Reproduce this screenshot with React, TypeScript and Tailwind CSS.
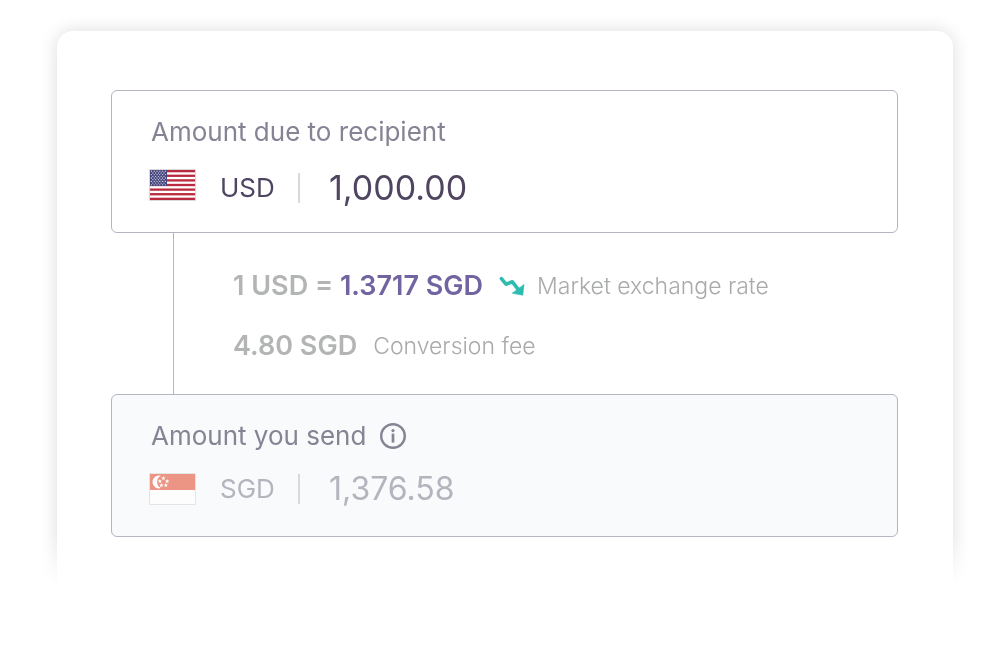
import type { ReactNode } from 'react';
import clsx from 'clsx';

const stripes = [0, 2, 4, 6, 8, 10, 12];

// alternating rows of 6 and 5 stars
const stars = Array.from({ length: 9 }).flatMap((_, row) =>
  Array.from({ length: row % 2 === 0 ? 6 : 5 }).map((_, col) => ({
    x: (row % 2 === 0 ? 1.6 : 3) + col * 2.8,
    y: 1.6 + row * 1.7,
  }))
);

const UsFlag = () => (
  <svg className="w-[47px] h-8 shrink-0" viewBox="0 0 47 32" aria-hidden="true">
    <rect width="47" height="32" rx="1" fill="#d9d9de" />
    <rect x="1" y="1" width="45" height="30" fill="#fff" />
    {stripes.map((i) => (
      <rect key={i} x="1" y={1 + (i * 30) / 13} width="45" height={30 / 13} fill="#b92a3e" />
    ))}
    <rect x="1" y="1" width="17" height="16" fill="#46467f" />
    {stars.map((s) => (
      <circle key={`${s.x}-${s.y}`} cx={s.x + 0.8} cy={s.y + 0.6} r="0.65" fill="#d5d5e4" />
    ))}
  </svg>
);

const SgFlag = () => (
  <svg className="w-[47px] h-8 shrink-0" viewBox="0 0 47 32" aria-hidden="true">
    <rect width="47" height="32" rx="1" fill="#e4e4e9" />
    <rect x="1" y="1" width="45" height="30" fill="#fdfdfd" />
    <rect x="1" y="1" width="45" height="16" fill="#ed9585" />
    <path d="M10.6 2.6a6.4 6.4 0 1 0 1.4 12.4a6.7 6.7 0 0 1 0-12.2z" fill="#fff" />
    {[
      [14.4, 5.2],
      [10.9, 8.2],
      [18.2, 8.2],
      [12.4, 12.2],
      [16.8, 12.2],
    ].map(([x, y]) => (
      <path
        key={`${x}-${y}`}
        transform={`translate(${x} ${y}) scale(1.2)`}
        d="M0-1.8l.5 1.2h1.3L.8.3l.4 1.3L0 .8l-1.2.8.4-1.3-1-.9h1.3z"
        fill="#fff"
      />
    ))}
  </svg>
);

const TrendDownIcon = () => (
  <svg className="w-[26px] h-5" viewBox="0 0 26 20" aria-hidden="true">
    <path d="M2.4 2.6L7 8.2l6.4-2.4 5.4 7" fill="none" stroke="#2ebcb0" strokeWidth="3.6" strokeLinecap="round" strokeLinejoin="round" />
    <path d="M25 8.4L23.8 19.2L13.2 17.2z" fill="#2ebcb0" stroke="#2ebcb0" strokeWidth="0.6" strokeLinejoin="round" />
  </svg>
);

const InfoIcon = () => (
  <svg className="w-[26px] h-[26px]" viewBox="0 0 26 26" aria-hidden="true">
    <circle cx="13" cy="13" r="11.8" fill="none" stroke="currentColor" strokeWidth="2.4" />
    <circle cx="13" cy="7.6" r="1.6" fill="currentColor" />
    <path d="M13 10.6v9" stroke="currentColor" strokeWidth="2.7" />
  </svg>
);

interface AmountBoxProps {
  id: string;
  label: string;
  currency: string;
  amount: string;
  flag: ReactNode;
  info?: boolean;
  muted?: boolean;
}

const AmountBox = ({ id, label, currency, amount, flag, info, muted }: AmountBoxProps) => (
  <div
    className={clsx(
      'min-h-[143px] rounded-md border border-[#b5b4c1] pt-6 px-[37px]',
      muted ? 'bg-[#f9fafc]' : 'bg-white'
    )}
  >
    <div className="flex items-center gap-[14px] pl-[2px] text-[#858494]">
      <label htmlFor={id} className="text-[26px] leading-[34px]">
        {label}
      </label>
      {info && (
        <button type="button" aria-label="More information">
          <InfoIcon />
        </button>
      )}
    </div>
    <div className="mt-5 flex items-start">
      {flag}
      <div className={clsx('flex flex-1 items-center min-w-0', muted ? 'h-8 text-[#b4b3be]' : 'h-[38px] text-[#4f4560]')}>
        <span className="ml-6 w-[78px] text-[26px] leading-[34px]">{currency}</span>
        <span className="h-[30px] w-[2px] bg-[#d8d8de]" />
        <input
          id={id}
          type="text"
          defaultValue={amount}
          readOnly={muted}
          className={clsx('ml-[29px] min-w-0 flex-1 bg-transparent leading-[38px] outline-none', muted ? 'text-[32px]' : 'text-[34px]')}
        />
      </div>
    </div>
  </div>
);

export default function App() {
  return (
    <main className="bg-white pr-[47px] pt-[31px] pl-[57px] font-['Inter',sans-serif] [mask-image:linear-gradient(to_bottom,black_535px,transparent_585px)]">
      <div className="rounded-2xl bg-white pl-[54px] pr-[55px] pt-[59px] pb-20 shadow-[0_0_18px_rgba(0,0,0,0.14)]">
        <AmountBox
          id="recipient-amount"
          label="Amount due to recipient"
          currency="USD"
          amount="1,000.00"
          flag={<UsFlag />}
        />

        {/* Rate and fee */}
        <div className="ml-[62px] border-l border-[#b5b4c1] pl-[59px] pt-9 pb-[31px] space-y-[26px] text-[#b3b4b4]">
          <div className="flex items-center">
            <span className="text-[27px] leading-[34px] font-semibold">
              1 USD = <span className="text-[#7264a0]">1.3717 SGD</span>
            </span>
            <span className="ml-4">
              <TrendDownIcon />
            </span>
            <span className="ml-3 text-[23px] leading-[34px] font-light text-[#a9aaaa]">Market exchange rate</span>
          </div>
          <div className="flex items-center">
            <span className="text-[27px] leading-[34px] font-semibold">4.80 SGD</span>
            <span className="ml-4 text-[23px] leading-[34px] font-light text-[#a9aaaa]">Conversion fee</span>
          </div>
        </div>

        <AmountBox
          id="send-amount"
          label="Amount you send"
          currency="SGD"
          amount="1,376.58"
          flag={<SgFlag />}
          info
          muted
        />
      </div>
    </main>
  );
}
